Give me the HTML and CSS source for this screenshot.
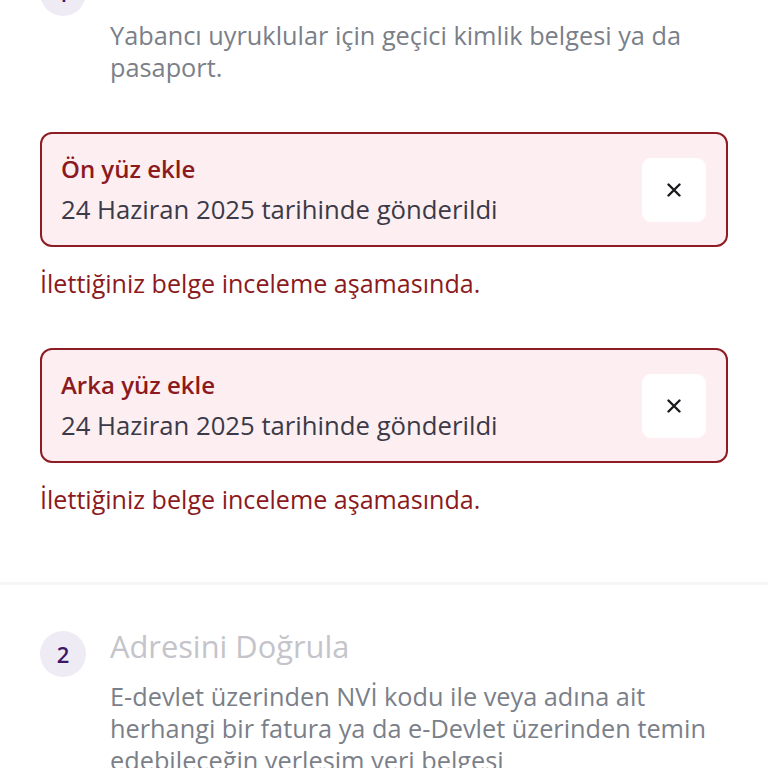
FILE: index.html
```html
<!DOCTYPE html>
<html lang="tr">
  <head>
    <meta charset="UTF-8">
    <meta name="viewport" content="width=device-width, initial-scale=1.0">
    <title>Hesabını Doğrula</title>
    <link rel="stylesheet" href="styles.css">
  </head>
  <body>
    <div class="page">

      <!-- Step 1: identity (header scrolled above the top) -->
      <section class="step">
        <div class="step-head">
          <div class="step-num">1</div>
        </div>
        <p class="step-desc">Yabancı uyruklular için geçici kimlik belgesi ya da pasaport.</p>

        <div class="upload">
          <div class="upload-card">
            <div class="upload-text">
              <div class="upload-title">Ön yüz ekle</div>
              <div class="upload-date">24 Haziran 2025 tarihinde gönderildi</div>
            </div>
            <button class="upload-remove" type="button" aria-label="Kaldır">
              <svg width="14" height="14" viewBox="0 0 14 14">
                <path d="M1.5 1.5 L12.5 12.5 M12.5 1.5 L1.5 12.5" stroke="#1b1b1f" stroke-width="2.4" stroke-linecap="round"/>
              </svg>
            </button>
          </div>
          <p class="upload-status">İlettiğiniz belge inceleme aşamasında.</p>
        </div>

        <div class="upload">
          <div class="upload-card">
            <div class="upload-text">
              <div class="upload-title">Arka yüz ekle</div>
              <div class="upload-date">24 Haziran 2025 tarihinde gönderildi</div>
            </div>
            <button class="upload-remove" type="button" aria-label="Kaldır">
              <svg width="14" height="14" viewBox="0 0 14 14">
                <path d="M1.5 1.5 L12.5 12.5 M12.5 1.5 L1.5 12.5" stroke="#1b1b1f" stroke-width="2.4" stroke-linecap="round"/>
              </svg>
            </button>
          </div>
          <p class="upload-status">İlettiğiniz belge inceleme aşamasında.</p>
        </div>
      </section>

      <div class="divider"></div>

      <!-- Step 2: address -->
      <section class="step">
        <div class="step-head">
          <div class="step-num">2</div>
          <h2 class="step-title">Adresini Doğrula</h2>
        </div>
        <p class="step-desc">E-devlet üzerinden NVİ kodu ile veya adına ait herhangi bir fatura ya da e-Devlet üzerinden temin edebileceğin yerleşim yeri belgesi</p>
      </section>

    </div>
  </body>
</html>
```

FILE: styles.css
```css
/* Verification steps */
body {
  margin: 0;
  background: #ffffff;
  font-family: "Open Sans", "Noto Sans", sans-serif;
  color: #3a3a48;
  overflow: hidden;
}

.page {
  margin-top: -30px;
}

.step {
  padding: 0 40px;
}

.step-head {
  display: flex;
  align-items: flex-start;
  gap: 24px;
}

.step-num {
  flex: none;
  width: 46px;
  height: 46px;
  border-radius: 50%;
  background: #efebf5;
  color: #3d1766;
  font-size: 22px;
  font-weight: 600;
  display: flex;
  align-items: center;
  justify-content: center;
}

.step-title {
  margin: 0;
  font-size: 30.8px;
  line-height: 30px;
  font-weight: 400;
  color: #c4c4ca;
}

.step-desc {
  margin: 3px 0 0;
  padding-left: 70px;
  font-size: 25.3px;
  line-height: 32px;
  color: #7b7f89;
}

/* Uploaded document cards */
.upload {
  margin-top: 49px;
}

.upload-card {
  display: flex;
  align-items: center;
  justify-content: space-between;
  padding: 19px 20px 19px 19px;
  background: #fdeff1;
  border: 2px solid #8e1c24;
  border-radius: 12px;
}

.upload-title {
  font-size: 24px;
  line-height: 32px;
  font-weight: 600;
  color: #8b1a20;
  margin-bottom: 9px;
}

.upload-date {
  font-size: 25.7px;
  line-height: 32px;
  color: #3a3a48;
}

.upload-remove {
  width: 64px;
  height: 64px;
  border: none;
  border-radius: 9px;
  background: #ffffff;
  display: flex;
  align-items: center;
  justify-content: center;
  padding: 0;
  cursor: pointer;
}

.upload-status {
  margin: 20px 0 0;
  font-size: 25.1px;
  line-height: 32px;
  color: #8b1a20;
}

.divider {
  height: 3px;
  margin: 67px 0 46px;
  background: #f6f6f7;
}
```
